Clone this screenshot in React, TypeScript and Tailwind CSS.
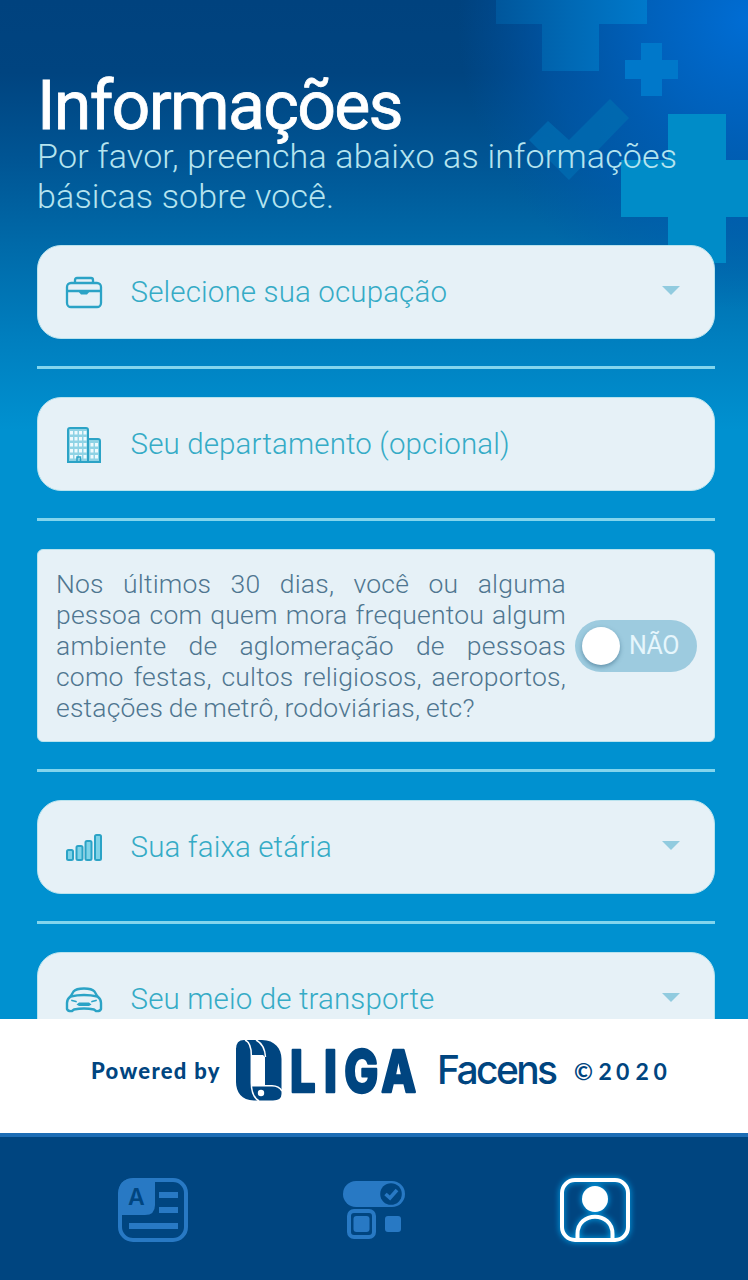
import type { ReactNode } from "react";

const INK = "#004580";
const MUTED = "#2879c4";

function Backdrop() {
  return (
    <svg className="absolute inset-0 h-full w-full" viewBox="0 0 748 1019" preserveAspectRatio="none" aria-hidden="true">
      <defs>
        <linearGradient id="sea" x1="0" y1="0" x2="0" y2="430" gradientUnits="userSpaceOnUse">
          <stop offset="0" stopColor="#00427e" />
          <stop offset="0.17" stopColor="#004480" />
          <stop offset="0.37" stopColor="#005594" />
          <stop offset="0.56" stopColor="#0069a8" />
          <stop offset="0.79" stopColor="#007fbf" />
          <stop offset="1" stopColor="#0091d0" />
        </linearGradient>
        <radialGradient id="glow" cx="748" cy="20" r="290" gradientUnits="userSpaceOnUse">
          <stop offset="0" stopColor="#006dd4" />
          <stop offset="0.35" stopColor="#0062be" stopOpacity="0.95" />
          <stop offset="0.7" stopColor="#005bb2" stopOpacity="0.6" />
          <stop offset="1" stopColor="#0055a8" stopOpacity="0" />
        </radialGradient>
        <linearGradient id="plus" x1="495" y1="0" x2="647" y2="0" gradientUnits="userSpaceOnUse">
          <stop offset="0" stopColor="#00569b" />
          <stop offset="0.5" stopColor="#0069b5" />
          <stop offset="1" stopColor="#0079cb" />
        </linearGradient>
      </defs>
      <rect width="748" height="1019" fill="url(#sea)" />
      <rect width="748" height="330" fill="url(#glow)" />
      <path d="M496 0H647V24H599V71H542V24H496Z" fill="url(#plus)" />
      <path d="M641 43H662V60H678V79H662V96H641V79H625V60H641Z" fill="#0078ca" />
      <path d="M529 140L548 121L569 140L610 99L629 118L569 180Z" fill="#006bb0" opacity="0.8" />
      <path d="M668 114H726V160H748V217H726V263H668V217H621V160H668Z" fill="#008cc8" />
    </svg>
  );
}

function Briefcase() {
  return (
    <svg width="38" height="34" viewBox="0 0 38 34" fill="none" stroke="#2ba3c6" strokeWidth="2.300">
      <path d="M10 7V4Q10 2 12 2H26Q28 2 28 4V7" />
      <rect x="2" y="7" width="34" height="24" rx="4" />
      <path d="M2 15H36" />
      <path d="M13 15H25L22 18.500H16Z" fill="#2ba3c6" stroke="none" />
    </svg>
  );
}

function Building() {
  return (
    <svg width="38" height="38" viewBox="0 0 38 38" fill="none" stroke="#2ba3c6" strokeWidth="2">
      <path d="M3 36V4Q3 2 5 2H21Q23 2 23 4V36ZM23 13H33Q35 13 35 15V36H23" fill="#8fd3e5" />
      <g fill="#eefafd" stroke="none">
        {[5, 11, 17, 23, 29].map((y) => (
          <path key={y} d={`M5 ${y}h3v3.500h-3zM9.500 ${y}h3v3.500h-3zM14 ${y}h3v3.500h-3zM18.500 ${y}h3v3.500h-3z`} />
        ))}
        {[17, 23, 29].map((y) => (
          <path key={y} d={`M25.500 ${y}h3v3.500h-3zM30 ${y}h3v3.500h-3z`} />
        ))}
      </g>
      <path d="M12 36V31H15.500V36" strokeWidth="1.500" />
    </svg>
  );
}

function Bars() {
  return (
    <svg width="38" height="32" viewBox="0 0 38 32" fill="#7fd3e8" stroke="#2ba3c6" strokeWidth="2">
      <rect x="2" y="18" width="6" height="10" rx="1.500" />
      <rect x="11.500" y="14" width="6" height="14" rx="1.500" />
      <rect x="20.500" y="9" width="6" height="19" rx="1.500" />
      <rect x="30" y="3" width="6" height="25" rx="1.500" />
    </svg>
  );
}

function Car() {
  return (
    <svg width="38" height="28" viewBox="0 0 38 28" fill="none" stroke="#2ba3c6" strokeWidth="2.400" strokeLinecap="round" strokeLinejoin="round">
      <path d="M5.500 10.500L8.500 5.500Q11 2.500 19 2.500T29.500 5.500L32.500 10.500" />
      <path d="M5.500 10.500Q19 7.500 32.500 10.500Q36 13 36 17V23Q35 25.500 31 25L29 23.500Q19 21.500 9 23.500L7 25Q3 25.500 2 23V17Q2 13 5.500 10.500Z" />
      <path d="M7 14.500L11 15.500M31 14.500L27 15.500" strokeWidth="1.800" />
      <path d="M11.500 18.500L14 16.500H24L26.500 18.500L24 20H14Z" fill="#2ba3c6" stroke="none" />
    </svg>
  );
}

function Field({ icon, label, select }: { icon: ReactNode; label: string; select?: boolean }) {
  return (
    <div className="flex h-[94px] shrink-0 items-center rounded-[24px] border border-[#b9e3ee] bg-[#e6f1f7] pr-[34px] pl-[27px]">
      <div className="mt-px flex w-[38px] shrink-0 justify-center">{icon}</div>
      <span className="ml-[27.500px] grow text-[29.500px] leading-[40px] font-light tracking-[0.140px] whitespace-nowrap text-[#35abc6]">{label}</span>
      {select && (
        <svg width="18" height="10" viewBox="0 0 18 10" className="mb-0.5">
          <path d="M0 0H18L9 9Z" fill="#91cbdf" />
        </svg>
      )}
    </div>
  );
}

function Rule() {
  return <div className="mt-[27px] mb-[28px] h-[3px] shrink-0 bg-[#83d5ed]" />;
}

function Question() {
  return (
    <div className="flex h-[193px] shrink-0 items-center rounded-[6px] border border-[#b9e3ee] bg-[#e6f1f7] pr-[17px] pl-[18px]">
      <p className="-mt-px w-[510px] text-[26.500px] leading-[31px] font-light tracking-[0.200px] [word-spacing:-1px] text-[#4f7690]">
        {[
          "Nos últimos 30 dias, você ou alguma",
          "pessoa com quem mora frequentou algum",
          "ambiente de aglomeração de pessoas",
          "como festas, cultos religiosos, aeroportos,",
        ].map((line) => (
          <span key={line} className="block whitespace-nowrap [text-align-last:justify]">{line}</span>
        ))}
        <span className="block">estações de metrô, rodoviárias, etc?</span>
      </p>
      <div className="ml-auto flex h-[52px] w-[122px] items-center rounded-full bg-[#9dcbdf] pl-[7px]">
        <div className="size-[38px] rounded-full bg-white shadow-[0_2px_4px_rgba(40,90,120,0.5)]" />
        <span className="ml-[9px] text-[25px] tracking-[-0.500px] text-[#e6f6fc]">NÃO</span>
      </div>
    </div>
  );
}

function LigaMark() {
  return (
    <svg width="48" height="62" viewBox="0 0 48 62">
      <path fillRule="evenodd" d="M1 9Q1 0 9 0H27C40 0 46.500 9 46.500 19V54Q46.500 60.500 38 60.500H20C7 61 1 52 1 42ZM17 15V45.500H30V17L28 15Z" fill={INK} />
      <path d="M10 0C15 2 16.300 8 16.300 15V43C16.300 52 19 58 24 61M21 0C27 3 30 9 30.500 17M17 45.800H37Q44 46 47 51" fill="none" stroke="#fff" strokeWidth="1.500" />
      <circle cx="26" cy="53" r="3.200" fill="#fff" />
    </svg>
  );
}

function Credits() {
  return (
    <div className="flex h-[114px] shrink-0 items-center bg-white text-[#004580]">
      <svg width="748" height="114" viewBox="0 0 748 114" fill={INK}>
        <text x="91" y="60" fontFamily="Lato" fontWeight="900" fontSize="22" textLength="128.500">Powered by</text>
        <g transform="translate(235 21)"><LigaMark /></g>
        <g transform="translate(290 73) scale(0.78 1)">
          <text x="0 43.500 69.500 117" fontFamily="Inter" fontWeight="800" fontSize="58" stroke={INK} strokeWidth="2.400" strokeLinejoin="round">LIGA</text>
        </g>
        <text x="437" y="65" fontFamily="Inter" fontWeight="500" fontSize="39" textLength="121">Facens</text>
        <text x="574 598.500 616 635.500 653.500" y="61" fontFamily="Lato" fontWeight="700" fontSize="23">©2020</text>
      </svg>
    </div>
  );
}

function NewsIcon() {
  return (
    <svg width="72" height="66" viewBox="0 0 72 66" fill={MUTED}>
      <rect x="3" y="3" width="66" height="60" rx="13" fill="none" stroke={MUTED} strokeWidth="4" />
      <path d="M2 38V15Q2 2 15 2H38V28Q38 38 28 38Z" />
      <path d="M42 15H61V21H42ZM42 30H61V36H42ZM12 46H61V52H12Z" />
      <text x="11" y="28" fill={INK} fontFamily="Inter" fontWeight="600" fontSize="23">A</text>
    </svg>
  );
}

function TogglesIcon() {
  return (
    <svg width="64" height="62" viewBox="0 0 64 62" fill={MUTED} className="mt-0.5">
      <rect x="1" y="1" width="62" height="26" rx="13" />
      <circle cx="49" cy="14" r="10.800" fill={INK} />
      <path d="M43.500 14L48 18L55 10" fill="none" stroke={MUTED} strokeWidth="3.600" />
      <rect x="7" y="31" width="25" height="26" rx="5" fill="none" stroke={MUTED} strokeWidth="4" />
      <rect x="11.500" y="36" width="16" height="16" rx="3" />
      <rect x="43" y="36" width="16" height="16" rx="3" />
    </svg>
  );
}

function ProfileIcon() {
  return (
    <svg width="72" height="66" viewBox="0 0 72 66" className="overflow-visible drop-shadow-[0_0_3px_#00b4ff]" fill="none" stroke="#fff" strokeWidth="4">
      <rect x="3" y="3" width="66" height="60" rx="13" />
      <circle cx="36" cy="22" r="13" fill="#fff" stroke="none" />
      <path d="M18.500 62V57C18.500 34 53.500 34 53.500 57V62" />
    </svg>
  );
}

export default function App() {
  return (
    <div className="flex h-[1280px] w-[748px] flex-col overflow-hidden bg-white font-['Roboto',sans-serif]">
      <main className="relative h-[1019px] shrink-0 overflow-hidden">
        <Backdrop />
        <div className="relative flex flex-col pt-[72px] pr-[33px] pl-[37px]">
          <h1 className="h-[64px] text-[68px] leading-[68px] tracking-[-1.700px] whitespace-nowrap text-white [-webkit-text-stroke:0.800px_white]">Informações</h1>
          <p className="h-[109px] text-[34px] leading-[40px] font-light tracking-[0.180px] whitespace-nowrap text-[#b5e4ef]">
            Por favor, preencha abaixo as informações
            <br />
            básicas sobre você.
          </p>
          <Field icon={<Briefcase />} label="Selecione sua ocupação" select />
          <Rule />
          <Field icon={<Building />} label="Seu departamento (opcional)" />
          <Rule />
          <Question />
          <Rule />
          <Field icon={<Bars />} label="Sua faixa etária" select />
          <Rule />
          <Field icon={<Car />} label="Seu meio de transporte" select />
        </div>
      </main>
      <Credits />
      <nav className="flex grow items-center justify-between border-t-[4px] border-[#1d6db5] bg-[#004580] pt-[3px] pr-[117px] pl-[117px]">
        <NewsIcon />
        <TogglesIcon />
        <ProfileIcon />
      </nav>
    </div>
  );
}
